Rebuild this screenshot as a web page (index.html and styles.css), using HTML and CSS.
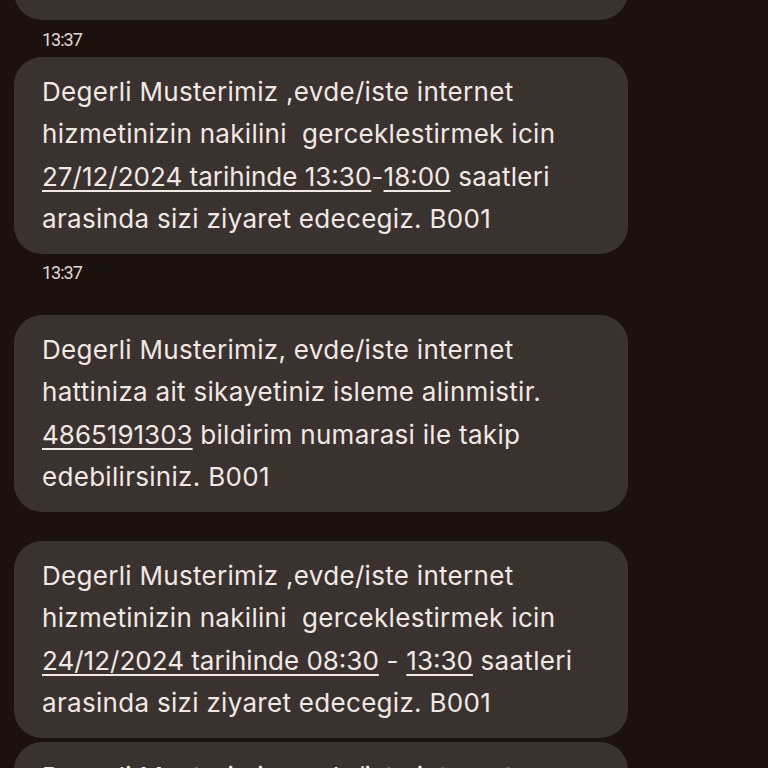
FILE: index.html
```html
<!DOCTYPE html>
<html lang="tr">
<head>
<meta charset="utf-8">
<title>Mesajlar</title>
<link rel="stylesheet" href="styles.css">
</head>
<body>
<main class="thread">
  <div class="bubble bubble-cut">Degerli Musterimiz, evde/iste internet<br>hattiniza ait sikayetiniz isleme alinmistir.<br>bildirim numarasi ile takip<br>edebilirsiniz. B001</div>
  <div class="time">13:37</div>
  <div class="bubble">Degerli Musterimiz ,evde/iste internet<br>hizmetinizin nakilini  gerceklestirmek icin<br><span class="link">27/12/2024 tarihinde 13:30</span>-<span class="link">18:00</span> saatleri<br>arasinda sizi ziyaret edecegiz. B001</div>
  <div class="time time-gap">13:37</div>
  <div class="bubble">Degerli Musterimiz, evde/iste internet<br>hattiniza ait sikayetiniz isleme alinmistir.<br><span class="link">4865191303</span> bildirim numarasi ile takip<br>edebilirsiniz. B001</div>
  <div class="bubble bubble-spaced">Degerli Musterimiz ,evde/iste internet<br>hizmetinizin nakilini  gerceklestirmek icin<br><span class="link">24/12/2024 tarihinde 08:30</span> - <span class="link">13:30</span> saatleri<br>arasinda sizi ziyaret edecegiz. B001</div>
  <div class="bubble bubble-close">Degerli Musterimiz ,evde/iste internet<br>hizmetinizin nakilini  gerceklestirmek icin<br>tarihinde saatleri<br>arasinda sizi ziyaret edecegiz. B001</div>
</main>
</body>
</html>
```

FILE: styles.css
```css
html, body {
  margin: 0;
  padding: 0;
  height: 768px;
  overflow: hidden;
  background: #1b120f;
}

.thread {
  display: flex;
  flex-direction: column;
  align-items: flex-start;
  padding-left: 14px;
  font-family: Inter, Roboto, sans-serif;
}

.bubble {
  box-sizing: border-box;
  width: 614px;
  height: 197px;
  padding: 14px 28px 0 28px;
  background: #3a322f;
  border-radius: 28px;
  color: #f1e8e4;
  font-size: 26px;
  letter-spacing: 0.3px;
  line-height: 42.4px;
  white-space: pre-wrap;
}

.bubble-cut {
  margin-top: -177px;
}

.bubble-spaced {
  margin-top: 29px;
}

.bubble-close {
  margin-top: 4px;
}

.link {
  letter-spacing: 0;
  text-decoration: underline;
  text-decoration-thickness: 2px;
  text-underline-offset: 4px;
}

.time {
  margin: 10px 0 7px 28px;
  height: 20px;
  line-height: 20px;
  font-family: Roboto, sans-serif;
  font-size: 18px;
  letter-spacing: -1px;
  color: #e0d7d3;
}

.time-gap {
  margin-top: 9px;
  margin-bottom: 32px;
}
```
